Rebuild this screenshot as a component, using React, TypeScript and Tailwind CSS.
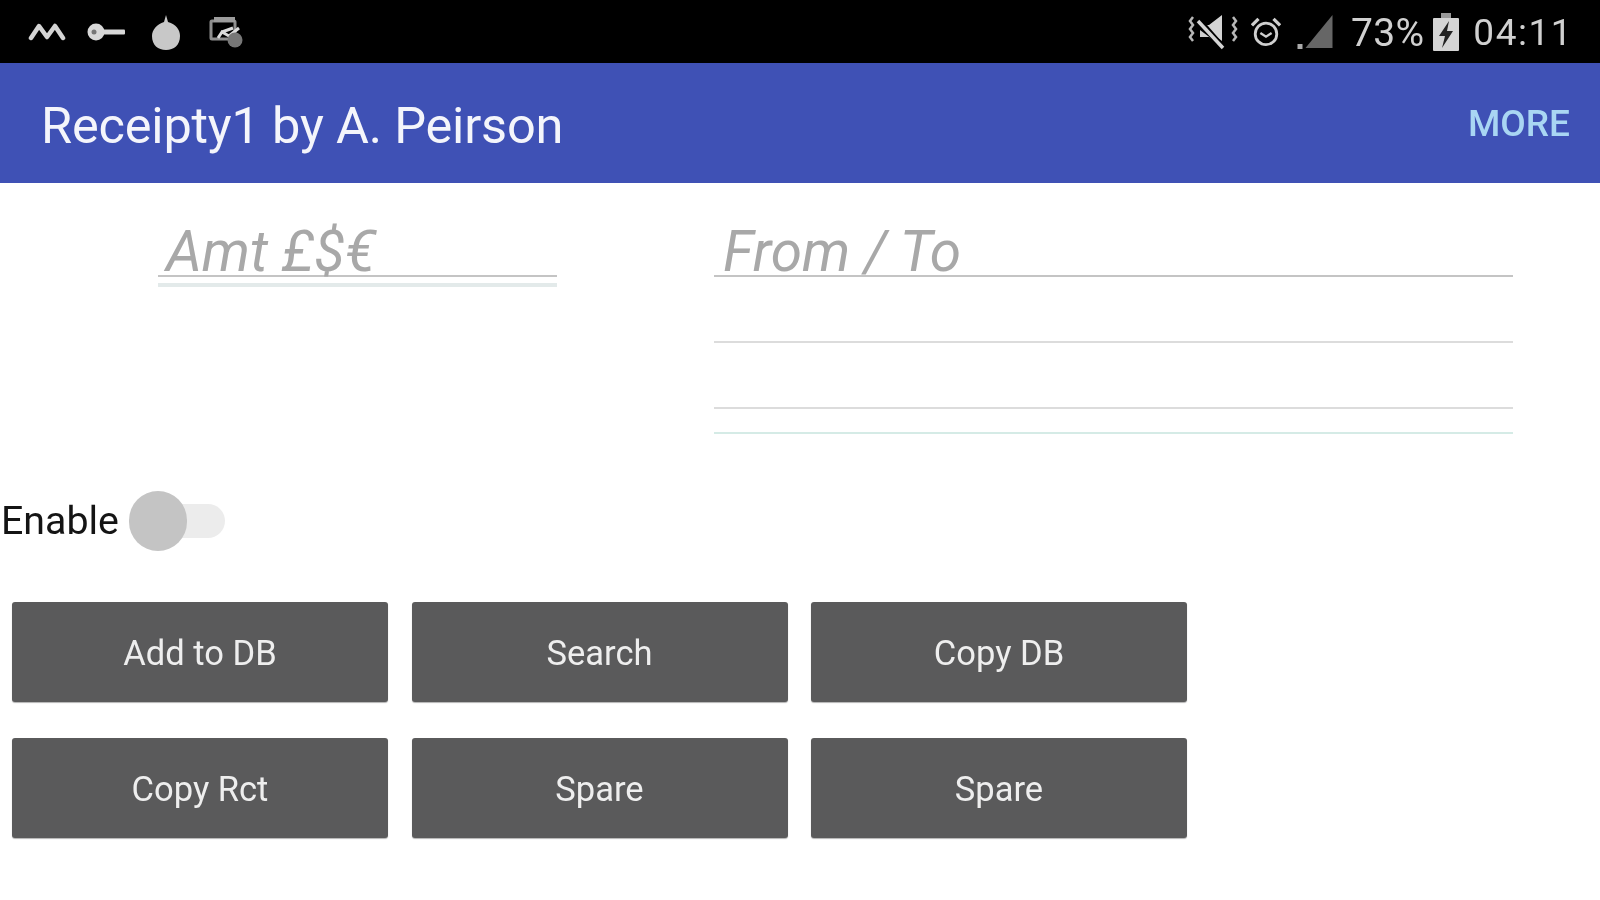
const font = { fontFamily: "Roboto, 'Liberation Sans', sans-serif" };

function Btn({ label }: { label: string }) {
  return (
    <button className="h-[100px] w-[376px] rounded-[3px] bg-[#5a5a5b] pt-[3px] text-[34.5px] font-normal text-[#eeeeee] shadow-[0_1px_1px_rgba(0,0,0,0.3)]">
      {label}
    </button>
  );
}

function LeftIcons() {
  return (
    <div className="flex items-center text-[#cfcfcf]">
      <svg width="38" height="20" viewBox="0 0 38 20" className="ml-[28px]" fill="none" stroke="#d4d4d4" strokeWidth="4.5" strokeLinejoin="round" strokeLinecap="round">
        <path d="M3 16 L11 4 L19 15 L27 4 L35 16" />
      </svg>
      <svg width="40" height="22" viewBox="0 0 40 22" className="ml-[20px]">
        <circle cx="10" cy="11" r="8.5" fill="#d8d8d8" />
        <circle cx="8" cy="11" r="2.5" fill="#777" />
        <rect x="16" y="8.5" width="23" height="5" rx="1" fill="#d8d8d8" />
      </svg>
      <svg width="28" height="36" viewBox="0 0 28 36" className="ml-[26px] mt-[2px]">
        <path d="M14 0 L16 7 C24 9 28 15 28 21 C28 30 22 35 14 35 C6 35 0 30 0 21 C0 15 5 9 12 7 Z" fill="#c8c8c8" />
      </svg>
      <svg width="36" height="34" viewBox="0 0 36 34" className="ml-[29px]" fill="none">
        <rect x="2" y="6" width="24" height="18" rx="1" stroke="#8f8f8f" strokeWidth="3" />
        <rect x="5" y="2" width="21" height="5" fill="#9c9c9c" />
        <path d="M9 23 L13 17 L20 21 L30 13 M13 17 L24 13" stroke="#dcdcdc" strokeWidth="3" />
        <circle cx="26" cy="25" r="7.5" fill="#777" />
      </svg>
    </div>
  );
}

function RightIcons() {
  return (
    <div className="flex items-center text-[#d0d0d0]">
      <svg width="50" height="36" viewBox="0 0 50 36" fill="none" className="mr-[13px]">
        <path d="M5 3 l-3 4 3 4 -3 4 3 4 -3 4 3 4" stroke="#b8b8b8" strokeWidth="2.5" />
        <path d="M45 3 l3 4 -3 4 3 4 -3 4 3 4 -3 4" stroke="#b8b8b8" strokeWidth="2.5" />
        <path d="M12 11 H21 L34 1 V27 Z" fill="#d4d4d4" />
        <path d="M12 16 V23 H21 L32 31 Z" fill="#cfcfcf" />
        <path d="M9 4 L36 35" stroke="#000" strokeWidth="6" />
        <path d="M10 7 L35 34" stroke="#d4d4d4" strokeWidth="3.5" />
      </svg>
      <svg width="30" height="32" viewBox="0 0 32 32" fill="none" className="mr-[16px]" stroke="#cfcfcf">
        <circle cx="16" cy="18" r="11.5" strokeWidth="3" />
        <path d="M10 17 L16 21 L22 17" strokeWidth="2.5" />
        <path d="M1 9 L8 2 M31 9 L24 2" strokeWidth="3.5" />
      </svg>
      <svg width="37" height="36" viewBox="0 0 36 36" className="mr-[17px]">
        <path d="M35 1 V34 H8 Z" fill="#666" />
        <rect x="0" y="30" width="5" height="5" fill="#aaa" />
      </svg>
      <span className="mr-[8px] mt-[3px] text-[39px] leading-none tracking-[0.3px]">73%</span>
      <svg width="28" height="38" viewBox="0 0 26 38" className="mr-[13px]">
        <rect x="8" y="0" width="10" height="5" fill="#999" />
        <rect x="0" y="5" width="26" height="33" rx="1" fill="#d4d4d4" />
        <path d="M16 8 L6 23 H12 L9 35 L20 18 H14 Z" fill="#222" />
      </svg>
      <span className="mr-[27px] mt-[2px] text-[37px] leading-none tracking-[1.5px]">04:11</span>
    </div>
  );
}

export default function App() {
  return (
    <div style={font} className="flex h-[900px] w-[1600px] flex-col overflow-hidden bg-white blur-[0.6px]">
      <header className="flex h-[63px] items-center justify-between bg-black">
        <LeftIcons />
        <RightIcons />
      </header>
      <div className="flex h-[120px] items-center justify-between bg-[#3f51b5] pl-[41px] pr-[30px]">
        <span className="mt-[7px] text-[50.5px] leading-none tracking-[-0.2px] text-[#f4f5fb]">Receipty1 by A. Peirson</span>
        <span className="mt-[1px] text-[37px] font-medium leading-none text-[#a9d6f3]">MORE</span>
      </div>

      <div className="flex h-[308px] items-start pl-[158px] pt-[41px]">
        <div className="w-[399px]">
          <div className="h-[53px] border-b-2 border-[#c4c4c4] pl-[8px] text-[56.7px] italic leading-[56px] text-[#a8a8a8]">Amt £$€</div>
          <div className="mt-[6px] h-[4px] bg-[#e3eaea]" />
        </div>
        <div className="ml-[157px] w-[799px]">
          <div className="h-[53px] border-b-2 border-[#c4c4c4] pl-[9px] text-[56.7px] italic leading-[56px] text-[#a8a8a8]">From / To</div>
          <div className="mt-[64px] h-[2px] bg-[#dcdcdc]" />
          <div className="mt-[64px] h-[2px] bg-[#dcdcdc]" />
          <div className="mt-[23px] h-[2px] bg-[#d5ebe6]" />
        </div>
      </div>

      <div className="flex h-[60px] items-center pl-[1px]">
        <span className="mt-[2px] text-[39.3px] leading-none text-[#141414]">Enable</span>
        <div className="relative ml-[10px] h-[34px] w-[96px]">
          <div className="ml-[28px] h-[34px] w-[68px] rounded-full bg-[#ececec]" />
          <div className="absolute left-0 top-[-13px] h-[60px] w-[58px] rounded-full bg-[#c4c4c4]" />
        </div>
      </div>

      <div className="mt-[51px] grid w-fit grid-cols-[376px_376px_376px] gap-x-[23.5px] gap-y-[36px] pl-[12px]">
        {["Add to DB", "Search", "Copy DB", "Copy Rct", "Spare", "Spare"].map((l, i) => (
          <Btn key={i} label={l} />
        ))}
      </div>
    </div>
  );
}
